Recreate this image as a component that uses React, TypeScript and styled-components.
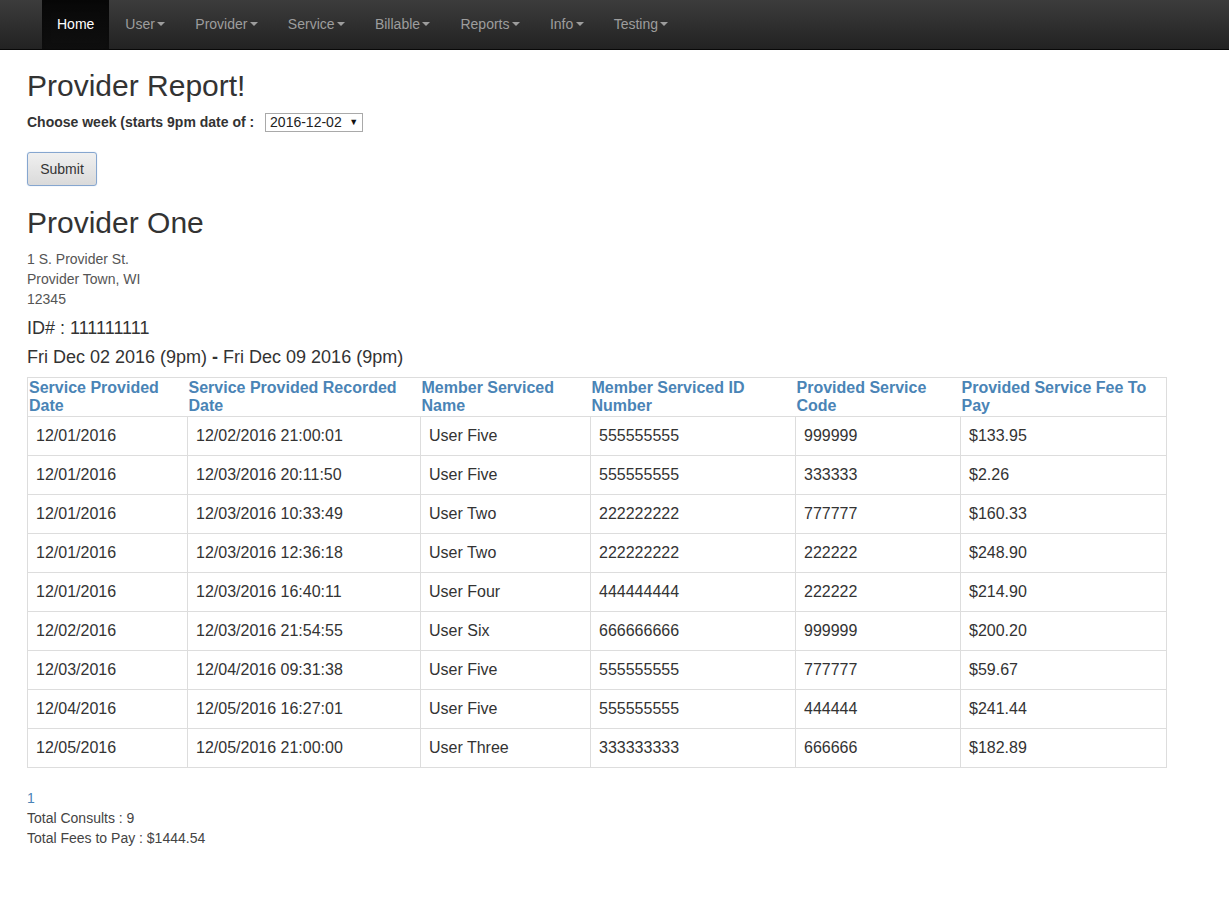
import React, { useState } from "react";
import styled, { createGlobalStyle } from "styled-components";

const GlobalStyle = createGlobalStyle`
  * { box-sizing: border-box; }
  body {
    margin: 0;
    background: #fff;
    font-family: "Liberation Sans", Arial, sans-serif;
    font-size: 14px;
    line-height: 20px;
    color: #333;
  }
`;

const navItems = ["User", "Provider", "Service", "Billable", "Reports", "Info", "Testing"];

const rows = [
  ["12/01/2016", "12/02/2016 21:00:01", "User Five", "555555555", "999999", "$133.95"],
  ["12/01/2016", "12/03/2016 20:11:50", "User Five", "555555555", "333333", "$2.26"],
  ["12/01/2016", "12/03/2016 10:33:49", "User Two", "222222222", "777777", "$160.33"],
  ["12/01/2016", "12/03/2016 12:36:18", "User Two", "222222222", "222222", "$248.90"],
  ["12/01/2016", "12/03/2016 16:40:11", "User Four", "444444444", "222222", "$214.90"],
  ["12/02/2016", "12/03/2016 21:54:55", "User Six", "666666666", "999999", "$200.20"],
  ["12/03/2016", "12/04/2016 09:31:38", "User Five", "555555555", "777777", "$59.67"],
  ["12/04/2016", "12/05/2016 16:27:01", "User Five", "555555555", "444444", "$241.44"],
  ["12/05/2016", "12/05/2016 21:00:00", "User Three", "333333333", "666666", "$182.89"],
];

const headers = [
  "Service Provided Date",
  "Service Provided Recorded Date",
  "Member Serviced Name",
  "Member Serviced ID Number",
  "Provided Service Code",
  "Provided Service Fee To Pay",
];

const colWidths = [160, 233, 170, 205, 165, 206];

export default function App() {
  const [week, setWeek] = useState("2016-12-02");

  return (
    <>
      <GlobalStyle />
      <Navbar>
        <NavList>
          <NavItem $active>Home</NavItem>
          {navItems.map((n) => (
            <NavItem key={n}>
              {n}
              <Caret />
            </NavItem>
          ))}
        </NavList>
      </Navbar>
      <Page>
        <Title>Provider Report!</Title>
        <WeekForm>
          <Label>Choose week (starts 9pm date of : </Label>
          <SelectWrap>
            <WeekSelect value={week} onChange={(e) => setWeek(e.target.value)}>
              <option>2016-12-02</option>
              <option>2016-11-25</option>
            </WeekSelect>
            <SelectArrow>▼</SelectArrow>
          </SelectWrap>
        </WeekForm>
        <SubmitButton>Submit</SubmitButton>
        <ProviderName>Provider One</ProviderName>
        <Address>
          <div>1 S. Provider St.</div>
          <div>Provider Town, WI</div>
          <div>12345</div>
        </Address>
        <SubHead>ID# : 111111111</SubHead>
        <SubHead>
          Fri Dec 02 2016 (9pm) <Dash>-</Dash> Fri Dec 09 2016 (9pm)
        </SubHead>
        <Table>
          <colgroup>
            {colWidths.map((w, i) => (
              <col key={i} style={{ width: w }} />
            ))}
          </colgroup>
          <thead>
            <tr>
              {headers.map((h) => (
                <Th key={h}>{h}</Th>
              ))}
            </tr>
          </thead>
          <tbody>
            {rows.map((r, i) => (
              <tr key={i}>
                {r.map((c, j) => (
                  <Td key={j}>{c}</Td>
                ))}
              </tr>
            ))}
          </tbody>
        </Table>
        <Footer>
          <PageLink href="#">1</PageLink>
          <div>Total Consults : 9</div>
          <div>Total Fees to Pay : $1444.54</div>
        </Footer>
      </Page>
    </>
  );
}

const Navbar = styled.nav`
  height: 50px;
  background: linear-gradient(to bottom, #3c3c3c 0%, #222 100%);
  border-bottom: 1px solid #080808;
  padding-left: 42px;
`;

const NavList = styled.ul`
  display: flex;
  margin: 0;
  padding: 0;
  list-style: none;
  height: 49px;
`;

const NavItem = styled.li<{ $active?: boolean }>`
  display: flex;
  align-items: center;
  padding: 0 15px 1px;
  font-size: 14px;
  color: ${(p) => (p.$active ? "#fff" : "#9d9d9d")};
  background: ${(p) =>
    p.$active ? "linear-gradient(to bottom, #080808 0%, #0f0f0f 100%)" : "transparent"};
  box-shadow: ${(p) => (p.$active ? "inset 0 3px 9px rgba(0,0,0,0.25)" : "none")};
  &:first-child {
    margin-right: 1px;
  }
`;

const Caret = styled.span`
  display: inline-block;
  width: 0;
  height: 0;
  margin-left: 2.4px;
  border-top: 4px solid #9d9d9d;
  border-left: 4px solid transparent;
  border-right: 4px solid transparent;
`;

const Page = styled.main`
  padding: 19px 27px 40px;
`;

const Title = styled.h2`
  margin: 0 0 10px;
  font-size: 30px;
  font-weight: 500;
  line-height: 33px;
`;

const WeekForm = styled.div`
  display: flex;
  align-items: center;
  height: 20px;
  margin-bottom: 20px;
`;

const Label = styled.span`
  font-weight: bold;
  white-space: pre;
`;

const SelectWrap = styled.span`
  position: relative;
  display: inline-block;
  margin-left: 7px;
`;

const WeekSelect = styled.select`
  appearance: none;
  -webkit-appearance: none;
  display: block;
  font-family: "Liberation Sans", Arial, sans-serif;
  font-size: 14px;
  height: 19px;
  width: 98px;
  border: 1px solid #a9a9a9;
  border-radius: 0;
  background: #fff;
  color: #222;
  padding: 0 0 0 4px;
  line-height: 17px;
`;

const SelectArrow = styled.span`
  position: absolute;
  right: 5px;
  top: 1px;
  font-size: 9px;
  line-height: 17px;
  color: #111;
  pointer-events: none;
`;

const SubmitButton = styled.button`
  display: block;
  width: 70px;
  height: 34px;
  font-family: "Liberation Sans", Arial, sans-serif;
  font-size: 14px;
  color: #333;
  border: 1px solid #86a6cf;
  border-radius: 3px;
  background: linear-gradient(to bottom, #f0f0f0 0%, #dadada 100%);
  box-shadow: 0 0 1px #9ec1ea;
`;

const ProviderName = styled.h2`
  margin: 20px 0 10px;
  font-size: 30px;
  font-weight: 500;
  line-height: 33px;
`;

const Address = styled.address`
  font-style: normal;
  color: #555;
  line-height: 20px;
`;

const SubHead = styled.h4`
  margin: 9px 0 0;
  font-size: 18px;
  font-weight: 500;
  line-height: 20px;
`;

const Dash = styled.span`
  font-weight: bold;
`;

const Table = styled.table`
  margin-top: 10px;
  width: 1139px;
  border-collapse: collapse;
  border: 1px solid #ddd;
  table-layout: fixed;
`;

const Th = styled.th`
  padding: 1px 3px 1px 1px;
  text-align: left;
  vertical-align: top;
  font-size: 16px;
  line-height: 18px;
  font-weight: bold;
  color: #4a84b6;
  border-bottom: 1px solid #ddd;
`;

const Td = styled.td`
  padding: 8px;
  font-size: 16px;
  line-height: 22px;
  border: 1px solid #ddd;
  color: #333;
`;

const Footer = styled.div`
  margin-top: 20px;
  line-height: 20px;
  color: #444;
`;

const PageLink = styled.a`
  display: block;
  color: #4a84b6;
  text-decoration: none;
`;
